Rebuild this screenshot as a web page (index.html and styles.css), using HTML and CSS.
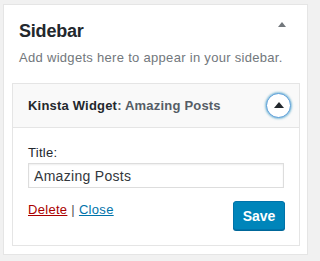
FILE: index.html
```html
<!DOCTYPE html>
<html>
<head>
<meta charset="utf-8">
<link rel="stylesheet" href="styles.css">
</head>
<body>
<div class="panel">
  <div class="panel-head">
    <h2 class="panel-title">Sidebar</h2>
    <span class="panel-toggle"></span>
  </div>
  <p class="panel-desc">Add widgets here to appear in your sidebar.</p>
  <div class="widget">
    <div class="widget-top">
      <h3 class="widget-title">Kinsta Widget<span class="in-title">: Amazing Posts</span></h3>
      <button class="widget-toggle"><span class="arrow"></span></button>
    </div>
    <div class="widget-inside">
      <label class="field-label" for="t">Title:</label>
      <input class="field-input" id="t" type="text" value="Amazing Posts">
      <div class="widget-actions">
        <div class="links">
          <a class="delete" href="#">Delete</a> <span class="sep">|</span> <a class="close" href="#">Close</a>
        </div>
        <button class="save">Save</button>
      </div>
    </div>
  </div>
</div>
</body>
</html>
```
FILE: styles.css
```css
html, body {
  margin: 0;
  padding: 0;
  background: #f1f1f1;
  font-family: "Liberation Sans", Arial, sans-serif;
  color: #444;
}
.panel {
  margin: 4px 0 0 3px;
  width: 303px;
  height: 249px;
  background: #fff;
  border: 1px solid #e5e5e5;
  box-sizing: content-box;
}
.panel-head {
  display: flex;
  justify-content: space-between;
  align-items: flex-start;
  padding: 15px 21px 0 15px;
}
.panel-title {
  margin: 0;
  font-size: 18px;
  line-height: 22px;
  font-weight: 700;
  color: #23282d;
  letter-spacing: -0.2px;
}
.panel-toggle {
  width: 0;
  height: 0;
  border-left: 4.5px solid transparent;
  border-right: 4.5px solid transparent;
  border-bottom: 5px solid #72777c;
  margin-top: 2px;
}
.panel-desc {
  margin: 7px 0 0 15px;
  font-size: 13px;
  line-height: 18px;
  color: #72777c;
  letter-spacing: 0.3px;
}
.widget {
  margin: 16px 0 0 8px;
  width: 286px;
  border: 1px solid #e5e5e5;
}
.widget-top {
  height: 43px;
  background: #f9f9f9;
  border-bottom: 1px solid #e5e5e5;
  display: flex;
  align-items: center;
  justify-content: space-between;
  padding: 0 8px 0 15px;
}
.widget-title {
  margin: 0;
  font-size: 13px;
  font-weight: 700;
  color: #23282d;
  letter-spacing: 0.2px;
}
.in-title {
  color: #555d66;
}
.widget-toggle {
  box-sizing: border-box;
  width: 25px;
  height: 25px;
  border-radius: 50%;
  border: 1px solid #5b9dd9;
  box-shadow: 0 0 2px 1px rgba(30,140,190,.5);
  background: #fff;
  padding: 0;
  display: flex;
  align-items: center;
  justify-content: center;
}
.arrow {
  width: 0;
  height: 0;
  border-left: 5px solid transparent;
  border-right: 5px solid transparent;
  border-bottom: 6px solid #23282d;
  margin-top: -2px;
}
.widget-inside {
  padding: 16px 14px 15px 15px;
  display: flex;
  flex-direction: column;
}
.field-label {
  font-size: 13px;
  line-height: 18px;
  color: #23282d;
  letter-spacing: 0.3px;
}
.field-input {
  margin-top: 1px;
  width: 256px;
  height: 25px;
  box-sizing: border-box;
  border: 1px solid #ddd;
  box-shadow: inset 0 1px 2px rgba(0,0,0,.07);
  padding: 0 5px;
  font-family: inherit;
  font-size: 14px;
  letter-spacing: 0.3px;
  color: #32373c;
}
.widget-actions {
  margin-top: 13px;
  display: flex;
  justify-content: space-between;
  align-items: flex-start;
}
.links {
  font-size: 13px;
  line-height: 18px;
  color: #555;
  letter-spacing: 0.3px;
}
.delete {
  color: #a00;
}
.close {
  color: #0073aa;
}
.sep {
  color: #555;
}
.save {
  box-sizing: border-box;
  width: 52px;
  height: 29px;
  background: #0085ba;
  border: 1px solid #0073aa;
  border-radius: 3px;
  box-shadow: 0 1px 0 #006799;
  color: #fff;
  font-family: inherit;
  font-size: 14px;
  font-weight: 700;
  padding: 0;
}
```
